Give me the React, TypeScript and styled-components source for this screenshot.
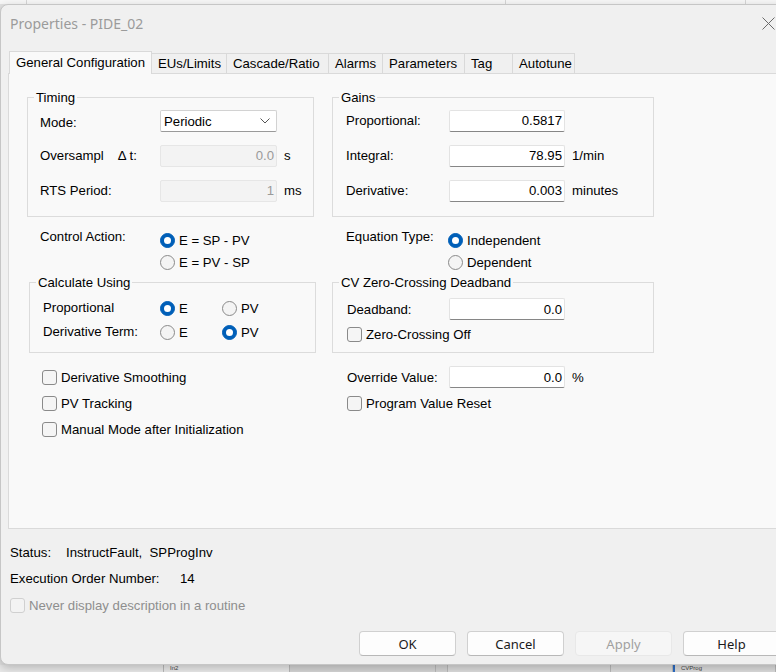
import React from "react";
import styled, { createGlobalStyle } from "styled-components";

const GlobalStyle = createGlobalStyle`
  html, body { margin: 0; padding: 0; background: #e4e4e4; }
  body { font-family: "Liberation Sans", Arial, sans-serif; font-size: 13.2px; color: #000; }
  * { box-sizing: border-box; }
`;

const Page = styled.div`
  width: 776px;
  height: 672px;
  overflow: hidden;
  display: flex;
  flex-direction: column;
  background: #e2e2e2;
`;

const TopStrip = styled.div`
  height: 4px;
  flex-shrink: 0;
  display: flex;
  background: #f7f7f7;
`;

const StripCell = styled.div<{ $w: number }>`
  width: ${(p) => p.$w}px;
  flex-shrink: 0;
  border-right: 1px solid #d6d6d6;
`;

const Dialog = styled.div`
  width: 792px;
  height: 661px;
  flex-shrink: 0;
  background: #f0f0f0;
  border: 1px solid #c6c6c6;
  border-radius: 8px;
  box-shadow: 0 3px 10px rgba(0, 0, 0, 0.22);
  display: flex;
  flex-direction: column;
  position: relative;
  z-index: 1;
`;

const TitleBar = styled.div`
  height: 36px;
  flex-shrink: 0;
  display: flex;
  align-items: center;
  justify-content: space-between;
  padding: 0 16px 0 9px;
`;

const Title = styled.span`
  font-family: "Noto Sans", "Open Sans", sans-serif;
  font-size: 14px;
  color: #9b9b9b;
`;

const TabRow = styled.div`
  margin-top: 10px;
  height: 22px;
  flex-shrink: 0;
  display: flex;
  align-items: flex-end;
  padding-left: 8px;
`;

const Tab = styled.div<{ $w: number; $active?: boolean }>`
  width: ${(p) => p.$w}px;
  height: ${(p) => (p.$active ? 23 : 20)}px;
  margin-bottom: ${(p) => (p.$active ? -1 : 0)}px;
  position: relative;
  z-index: ${(p) => (p.$active ? 2 : 0)};
  background: ${(p) => (p.$active ? "#f9f9f9" : "#f0f0f0")};
  border-top: 1px solid #d9d9d9;
  border-right: 1px solid #d9d9d9;
  border-left: ${(p) => (p.$active ? "1px solid #d9d9d9" : "none")};
  display: flex;
  align-items: center;
  padding-left: 6px;
  padding-bottom: ${(p) => (p.$active ? 1 : 0)}px;
  white-space: nowrap;
  color: #000;
`;

const Panel = styled.div`
  margin: 0 8px 0 7px;
  height: 456px;
  flex-shrink: 0;
  border: 1px solid #dadada;
  background: #f9f9f9;
  padding: 16px 0 0 18px;
  display: grid;
  grid-template-columns: 305px 322px;
  align-content: start;
`;

const Group = styled.fieldset<{ $w: number; $shift?: number; $top?: number }>`
  width: ${(p) => p.$w}px;
  margin: ${(p) => p.$top ?? 0}px 0 0 ${(p) => p.$shift ?? 0}px;
  padding: 0;
  border: 1px solid #dcdcdc;
  min-width: 0;
`;

const Legend = styled.legend`
  margin-left: 6px;
  padding: 0 2px;
  line-height: 15px;
  font-size: 13.2px;
`;

const GroupBody = styled.div<{ $pl: number; $pt: number; $pb: number; $gap: number }>`
  padding: ${(p) => p.$pt}px 0 ${(p) => p.$pb}px ${(p) => p.$pl}px;
  display: flex;
  flex-direction: column;
  gap: ${(p) => p.$gap}px;
`;

const FieldRow = styled.div<{ $h: number }>`
  height: ${(p) => p.$h}px;
  display: flex;
  align-items: center;
`;

const Label = styled.span<{ $w: number; $dy?: number }>`
  width: ${(p) => p.$w}px;
  flex-shrink: 0;
  white-space: nowrap;
  display: flex;
  align-items: center;
  margin-top: ${(p) => p.$dy ?? 0}px;
`;

const Delta = styled.span`
  margin-left: 14px;
  white-space: pre;
`;

const TextBox = styled.div<{ $w: number; $disabled?: boolean }>`
  width: ${(p) => p.$w}px;
  height: 22px;
  flex-shrink: 0;
  background: ${(p) => (p.$disabled ? "#f3f3f3" : "#ffffff")};
  border: 1px solid ${(p) => (p.$disabled ? "#e6e6e6" : "#e3e3e3")};
  border-bottom-color: ${(p) => (p.$disabled ? "#e6e6e6" : "#868686")};
  border-radius: 2px;
  color: ${(p) => (p.$disabled ? "#9a9a9a" : "#000")};
  display: flex;
  align-items: center;
  justify-content: flex-end;
  padding-right: 2px;
`;

const Select = styled.div<{ $w: number }>`
  width: ${(p) => p.$w}px;
  height: 22px;
  flex-shrink: 0;
  background: #ffffff;
  border: 1px solid #d2d2d2;
  border-bottom-color: #9a9a9a;
  border-radius: 2px;
  display: flex;
  align-items: center;
  justify-content: space-between;
  padding: 0 6px 0 3px;
`;

const Unit = styled.span`
  margin-left: 7px;
  white-space: nowrap;
`;

const ActionBlock = styled.div<{ $pl: number; $top: number }>`
  margin-top: ${(p) => p.$top}px;
  padding-left: ${(p) => p.$pl}px;
  display: flex;
  align-items: flex-start;
`;

const TopLabel = styled.span<{ $w: number }>`
  width: ${(p) => p.$w}px;
  flex-shrink: 0;
  line-height: 16px;
  white-space: nowrap;
`;

const OptionList = styled.div`
  display: flex;
  flex-direction: column;
`;

const Option = styled.div<{ $w?: number; $h?: number }>`
  ${(p) => (p.$w ? `width: ${p.$w}px;` : "")}
  height: ${(p) => p.$h ?? 22}px;
  display: flex;
  align-items: center;
  gap: 4px;
  white-space: nowrap;
  flex-shrink: 0;
`;

const RadioCircle = styled.span<{ $on?: boolean }>`
  width: 15px;
  height: 15px;
  border-radius: 50%;
  flex-shrink: 0;
  border: 1px solid ${(p) => (p.$on ? "#005fb8" : "#8a8a8a")};
  background: ${(p) => (p.$on ? "#005fb8" : "#f4f4f4")};
  display: flex;
  align-items: center;
  justify-content: center;
  &::after {
    content: "";
    width: 7px;
    height: 7px;
    border-radius: 50%;
    background: #fff;
    display: ${(p) => (p.$on ? "block" : "none")};
  }
`;

const CheckBox = styled.span<{ $disabled?: boolean }>`
  width: 15px;
  height: 15px;
  flex-shrink: 0;
  border-radius: 3px;
  border: 1px solid ${(p) => (p.$disabled ? "#d0d0d0" : "#8a8a8a")};
  background: ${(p) => (p.$disabled ? "#f3f3f3" : "#f5f5f5")};
`;

const CheckList = styled.div<{ $pl: number; $top: number }>`
  margin-top: ${(p) => p.$top}px;
  padding-left: ${(p) => p.$pl}px;
  display: flex;
  flex-direction: column;
  gap: 4px;
`;

const StatusArea = styled.div`
  margin-top: 10px;
  padding-left: 9px;
  display: flex;
  flex-direction: column;
`;

const StatusRow = styled.div<{ $muted?: boolean }>`
  height: 26px;
  display: flex;
  align-items: center;
  white-space: pre;
  color: ${(p) => (p.$muted ? "#8e8e8e" : "#000")};
  gap: ${(p) => (p.$muted ? 4 : 0)}px;
  padding-top: ${(p) => (p.$muted ? 2 : 0)}px;
`;

const ButtonRow = styled.div`
  margin-top: 14px;
  padding-right: 11px;
  display: flex;
  justify-content: flex-end;
  gap: 11px;
`;

const Button = styled.div<{ $disabled?: boolean }>`
  width: 97px;
  height: 25px;
  flex-shrink: 0;
  border-radius: 4px;
  border: 1px solid ${(p) => (p.$disabled ? "#e8e8e8" : "#d0d0d0")};
  border-bottom-color: ${(p) => (p.$disabled ? "#e8e8e8" : "#b8b8b8")};
  background: ${(p) => (p.$disabled ? "#f6f6f6" : "#fdfdfd")};
  color: ${(p) => (p.$disabled ? "#a0a0a0" : "#1a1a1a")};
  font-family: "Noto Sans", "Open Sans", sans-serif;
  font-size: 13px;
  display: flex;
  align-items: center;
  justify-content: center;
`;

const BottomStrip = styled.div`
  flex: 1;
  display: flex;
  overflow: hidden;
  background: #dedede;
`;

const BottomCell = styled.div<{ $w?: number; $bg: string; $accent?: boolean }>`
  ${(p) => (p.$w ? `width: ${p.$w}px; flex-shrink: 0;` : "flex: 1;")}
  background: ${(p) => p.$bg};
  border-right: 1px solid #b9b9b9;
  border-left: ${(p) => (p.$accent ? "2px solid #2b6cc4" : "none")};
  font-family: "Liberation Sans", sans-serif;
  font-size: 6px;
  line-height: 6px;
  color: #444;
  padding-left: 6px;
  white-space: nowrap;
`;

const CloseIcon = () => (
  <svg width="13" height="13" viewBox="0 0 13 13">
    <path d="M0.5 0.5 L12.5 12.5 M12.5 0.5 L0.5 12.5" stroke="#6a6a6a" strokeWidth="1" fill="none" />
  </svg>
);

const Chevron = () => (
  <svg width="10" height="6" viewBox="0 0 10 6">
    <path d="M0.5 0.5 L5 5 L9.5 0.5" stroke="#555" strokeWidth="1" fill="none" />
  </svg>
);

const tabs: [string, number][] = [
  ["General Configuration", 143],
  ["EUs/Limits", 75],
  ["Cascade/Ratio", 102],
  ["Alarms", 54],
  ["Parameters", 82],
  ["Tag", 48],
  ["Autotune", 62],
];

const Radio = ({ on, label, w }: { on?: boolean; label: string; w?: number }) => (
  <Option $w={w}>
    <RadioCircle $on={on} />
    <span>{label}</span>
  </Option>
);

const Check = ({ label, h }: { label: string; h?: number }) => (
  <Option $h={h}>
    <CheckBox />
    <span>{label}</span>
  </Option>
);

export default function App() {
  return (
    <>
      <GlobalStyle />
      <Page>
        <TopStrip>
          <StripCell $w={27} />
          <StripCell $w={479} />
          <StripCell $w={240} />
        </TopStrip>
        <Dialog>
          <TitleBar>
            <Title>Properties - PIDE_02</Title>
            <CloseIcon />
          </TitleBar>
          <TabRow>
            {tabs.map(([t, w], i) => (
              <Tab key={t} $w={w} $active={i === 0}>
                {t}
              </Tab>
            ))}
          </TabRow>
          <Panel>
            {/* Row 1 */}
            <Group $w={287}>
              <Legend>Timing</Legend>
              <GroupBody $pl={12} $pt={5} $pb={14} $gap={12}>
                <FieldRow $h={22}>
                  <Label $w={120} $dy={3}>Mode:</Label>
                  <Select $w={117}>
                    <span>Periodic</span>
                    <Chevron />
                  </Select>
                </FieldRow>
                <FieldRow $h={23}>
                  <Label $w={120}>
                    Oversampl<Delta>Δ t:</Delta>
                  </Label>
                  <TextBox $w={117} $disabled>
                    0.0
                  </TextBox>
                  <Unit>s</Unit>
                </FieldRow>
                <FieldRow $h={23}>
                  <Label $w={120}>RTS Period:</Label>
                  <TextBox $w={117} $disabled>
                    1
                  </TextBox>
                  <Unit>ms</Unit>
                </FieldRow>
              </GroupBody>
            </Group>
            <Group $w={322}>
              <Legend>Gains</Legend>
              <GroupBody $pl={13} $pt={4} $pb={14} $gap={12}>
                <FieldRow $h={23}>
                  <Label $w={103}>Proportional:</Label>
                  <TextBox $w={116}>0.5817</TextBox>
                </FieldRow>
                <FieldRow $h={23}>
                  <Label $w={103}>Integral:</Label>
                  <TextBox $w={116}>78.95</TextBox>
                  <Unit>1/min</Unit>
                </FieldRow>
                <FieldRow $h={23}>
                  <Label $w={103}>Derivative:</Label>
                  <TextBox $w={116}>0.003</TextBox>
                  <Unit>minutes</Unit>
                </FieldRow>
              </GroupBody>
            </Group>

            {/* Row 2 */}
            <ActionBlock $pl={13} $top={12}>
              <TopLabel $w={120}>Control Action:</TopLabel>
              <OptionList>
                <Radio on label="E = SP - PV" />
                <Radio label="E = PV - SP" />
              </OptionList>
            </ActionBlock>
            <ActionBlock $pl={14} $top={12}>
              <TopLabel $w={102}>Equation Type:</TopLabel>
              <OptionList>
                <Radio on label="Independent" />
                <Radio label="Dependent" />
              </OptionList>
            </ActionBlock>

            {/* Row 3 */}
            <Group $w={287} $shift={2} $top={2}>
              <Legend>Calculate Using</Legend>
              <GroupBody $pl={13} $pt={6} $pb={8} $gap={0}>
                <FieldRow $h={24}>
                  <Label $w={117} $dy={-2}>Proportional</Label>
                  <Radio on label="E" w={62} />
                  <Radio label="PV" />
                </FieldRow>
                <FieldRow $h={24}>
                  <Label $w={117} $dy={-2}>Derivative Term:</Label>
                  <Radio label="E" w={62} />
                  <Radio on label="PV" />
                </FieldRow>
              </GroupBody>
            </Group>
            <Group $w={322} $top={2}>
              <Legend>CV Zero-Crossing Deadband</Legend>
              <GroupBody $pl={14} $pt={8} $pb={8} $gap={5}>
                <FieldRow $h={22}>
                  <Label $w={102}>Deadband:</Label>
                  <TextBox $w={116}>0.0</TextBox>
                </FieldRow>
                <Check label="Zero-Crossing Off" h={18} />
              </GroupBody>
            </Group>

            {/* Row 4 */}
            <CheckList $pl={15} $top={13}>
              <Check label="Derivative Smoothing" />
              <Check label="PV Tracking" />
              <Check label="Manual Mode after Initialization" />
            </CheckList>
            <CheckList $pl={15} $top={13}>
              <FieldRow $h={22}>
                <Label $w={102}>Override Value:</Label>
                <TextBox $w={116}>0.0</TextBox>
                <Unit>%</Unit>
              </FieldRow>
              <Check label="Program Value Reset" />
            </CheckList>
          </Panel>

          <StatusArea>
            <StatusRow>
              <Label $w={56}>Status:</Label>
              <span>InstructFault,  SPProgInv</span>
            </StatusRow>
            <StatusRow>
              <Label $w={170}>Execution Order Number:</Label>
              <span>14</span>
            </StatusRow>
            <StatusRow $muted>
              <CheckBox $disabled />
              <span>Never display description in a routine</span>
            </StatusRow>
          </StatusArea>

          <ButtonRow>
            <Button>OK</Button>
            <Button>Cancel</Button>
            <Button $disabled>Apply</Button>
            <Button>Help</Button>
          </ButtonRow>
        </Dialog>
        <BottomStrip>
          <BottomCell $w={164} $bg="#e9e9e9" />
          <BottomCell $w={126} $bg="#e9e9e9">In2</BottomCell>
          <BottomCell $w={146} $bg="#d4d4d4" />
          <BottomCell $w={12} $bg="#d4d4d4" />
          <BottomCell $w={163} $bg="#dcdcdc" />
          <BottomCell $w={62} $bg="#dcdcdc" />
          <BottomCell $bg="#dcdcdc" $accent>CVProg</BottomCell>
        </BottomStrip>
      </Page>
    </>
  );
}
